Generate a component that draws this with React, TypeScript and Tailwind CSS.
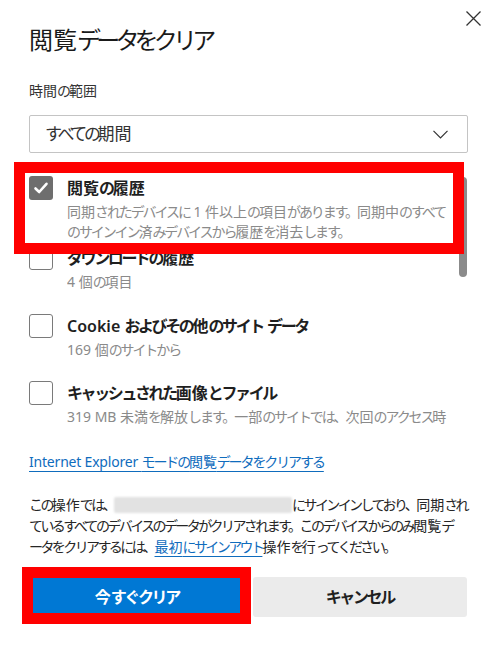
import React from "react";

const font = "font-['Noto_Sans','Noto_Sans_CJK_JP',sans-serif]";

// kana in the reference font are proportional, Noto's are full width: tighten only the kana runs
const KANA = /[\u3000-\u30ff\uff01-\uff0f]/;

const J = ({ t, k = "tracking-[-0.15em]" }: { t: string; k?: string }) => {
  const runs: { kana: boolean; s: string }[] = [];
  for (const ch of t) {
    const kana = KANA.test(ch);
    const last = runs[runs.length - 1];
    if (last && last.kana === kana) last.s += ch;
    else runs.push({ kana, s: ch });
  }
  return (
    <>
      {runs.map((r, i) =>
        r.kana ? (
          <span key={i} className={k}>
            {r.s}
          </span>
        ) : (
          <React.Fragment key={i}>{r.s}</React.Fragment>
        )
      )}
    </>
  );
};

type Item = {
  title: string;
  lines: string[];
  checked?: boolean;
  mt: string;
};

const items: Item[] = [
  {
    title: "閲覧の履歴",
    lines: [
      "同期されたデバイスに 1 件以上の項目があります。同期中のすべて",
      "のサインイン済みデバイスから履歴を消去します。",
    ],
    checked: true,
    mt: "mt-0",
  },
  { title: "ダウンロードの履歴", lines: ["4 個の項目"], mt: "mt-[4px]" },
  { title: "Cookie およびその他のサイト データ", lines: ["169 個のサイトから"], mt: "mt-[22px]" },
  {
    title: "キャッシュされた画像とファイル",
    lines: ["319 MB 未満を解放します。一部のサイトでは、次回のアクセス時"],
    mt: "mt-[21px]",
  },
];

const Checkbox = ({ checked }: { checked?: boolean }) =>
  checked ? (
    <span className="flex h-6 w-6 shrink-0 items-center justify-center rounded-[3px] bg-[#6e6e6e]">
      <svg width="16" height="16" viewBox="0 0 16 16" fill="none">
        <path d="M2.5 8.5 L6.2 12 L13.5 3.8" stroke="white" strokeWidth="2.6" strokeLinecap="round" strokeLinejoin="round" />
      </svg>
    </span>
  ) : (
    <span className="h-6 w-6 shrink-0 rounded-[3px] border border-[#7a7a7a] bg-white" />
  );

const ClearItem = ({ item }: { item: Item }) => (
  <div className={`flex items-start gap-[14px] ${item.mt}`}>
    <Checkbox checked={item.checked} />
    <div className="min-w-0 flex-1 overflow-hidden">
      <div className="text-[16px] leading-6 font-semibold text-[#1f1f1f] whitespace-nowrap">
        <J t={item.title} />
      </div>
      <div className="mt-[2px] text-[14px] leading-5 text-[#8a8a8a]">
        {item.lines.map((l, i) => (
          <div key={i} className="whitespace-nowrap">
            <J t={l} />
          </div>
        ))}
      </div>
    </div>
  </div>
);

export default function App() {
  const pk = "tracking-[-0.185em]";
  return (
    <div className={`relative h-[646px] w-[496px] overflow-hidden bg-white px-[29px] pt-[24px] ${font}`}>
      <button type="button" className="absolute right-[15px] top-[11px]">
        <svg width="15" height="15" viewBox="0 0 15 15">
          <path d="M0.5 0.5 L14.5 14.5 M14.5 0.5 L0.5 14.5" stroke="#333" strokeWidth="1.3" />
        </svg>
      </button>

      <h1 className="text-[24px] leading-8 font-normal text-[#1a1a1a]">
        <J t="閲覧データをクリア" k="tracking-[-0.2em]" />
      </h1>

      <div className="mt-[25px] text-[14px] leading-5 text-[#333]">
        <J t="時間の範囲" />
      </div>

      <div className="mt-[14px] flex h-[38px] w-[439px] items-center justify-between rounded-[2px] border border-[#c4c4c4] pl-[15px] pr-[19px]">
        <span className="text-[17px] text-[#333]">
          <J t="すべての期間" k="tracking-[-0.2em]" />
        </span>
        <svg width="15" height="9" viewBox="0 0 15 9" fill="none">
          <path d="M0.5 0.8 L7.5 7.8 L14.5 0.8" stroke="#333" strokeWidth="1.2" />
        </svg>
      </div>

      <div className="relative mt-[13px] h-[268px] overflow-hidden">
        <div className="flex flex-col pt-[10px] pr-[12px]">
          {items.map((it) => (
            <ClearItem key={it.title} item={it} />
          ))}
        </div>
        <div className="absolute right-0 top-[11px] h-[100px] w-2 rounded-full bg-[#8b8b8b]" />
      </div>

      <a
        href="#"
        className="mt-[18px] inline-block text-[14px] leading-5 tracking-[-0.2px] text-[#0f6cbd] underline decoration-[#0f6cbd] underline-offset-[4px]"
      >
        <J t="Internet Explorer モードの閲覧データをクリアする" />
      </a>

      <div className="mt-[21px] text-[14px] leading-[21px] text-[#262626]">
        <div className="whitespace-nowrap">
          <J t="この操作では、" k={pk} />
          <span className="inline-block h-[16px] w-[178px] rounded-[2px] bg-[#e2e2e2] align-[-3px] blur-[1px]" />
          <J t="にサインインしており、同期され" k={pk} />
        </div>
        <div className="whitespace-nowrap">
          <J t="ているすべてのデバイスのデータがクリアされます。このデバイスからのみ閲覧デ" k={pk} />
        </div>
        <div className="whitespace-nowrap">
          <J t="ータをクリアするには、" k={pk} />
          <a href="#" className="text-[#0f6cbd] underline decoration-[#0f6cbd] underline-offset-[4px]">
            <J t="最初にサインアウト" k={pk} />
          </a>
          <J t="操作を行ってください。" k={pk} />
        </div>
      </div>

      <div className="mt-[20px] flex gap-2">
        <button type="button" className="h-10 w-[216px] rounded-[3px] bg-[#0078d4] text-[16px] font-semibold text-white">
          <J t="今すぐクリア" />
        </button>
        <button type="button" className="h-10 w-[215px] rounded-[3px] bg-[#ebebeb] text-[16px] font-semibold text-[#1f1f1f]">
          <J t="キャンセル" />
        </button>
      </div>

      <div className="pointer-events-none absolute left-[14px] top-[162px] h-[92px] w-[450px] border-[11px] border-[#ff0000]" />
      <div className="pointer-events-none absolute left-[22px] top-[567px] h-[57px] w-[229px] border-[11px] border-[#ff0000]" />
    </div>
  );
}
